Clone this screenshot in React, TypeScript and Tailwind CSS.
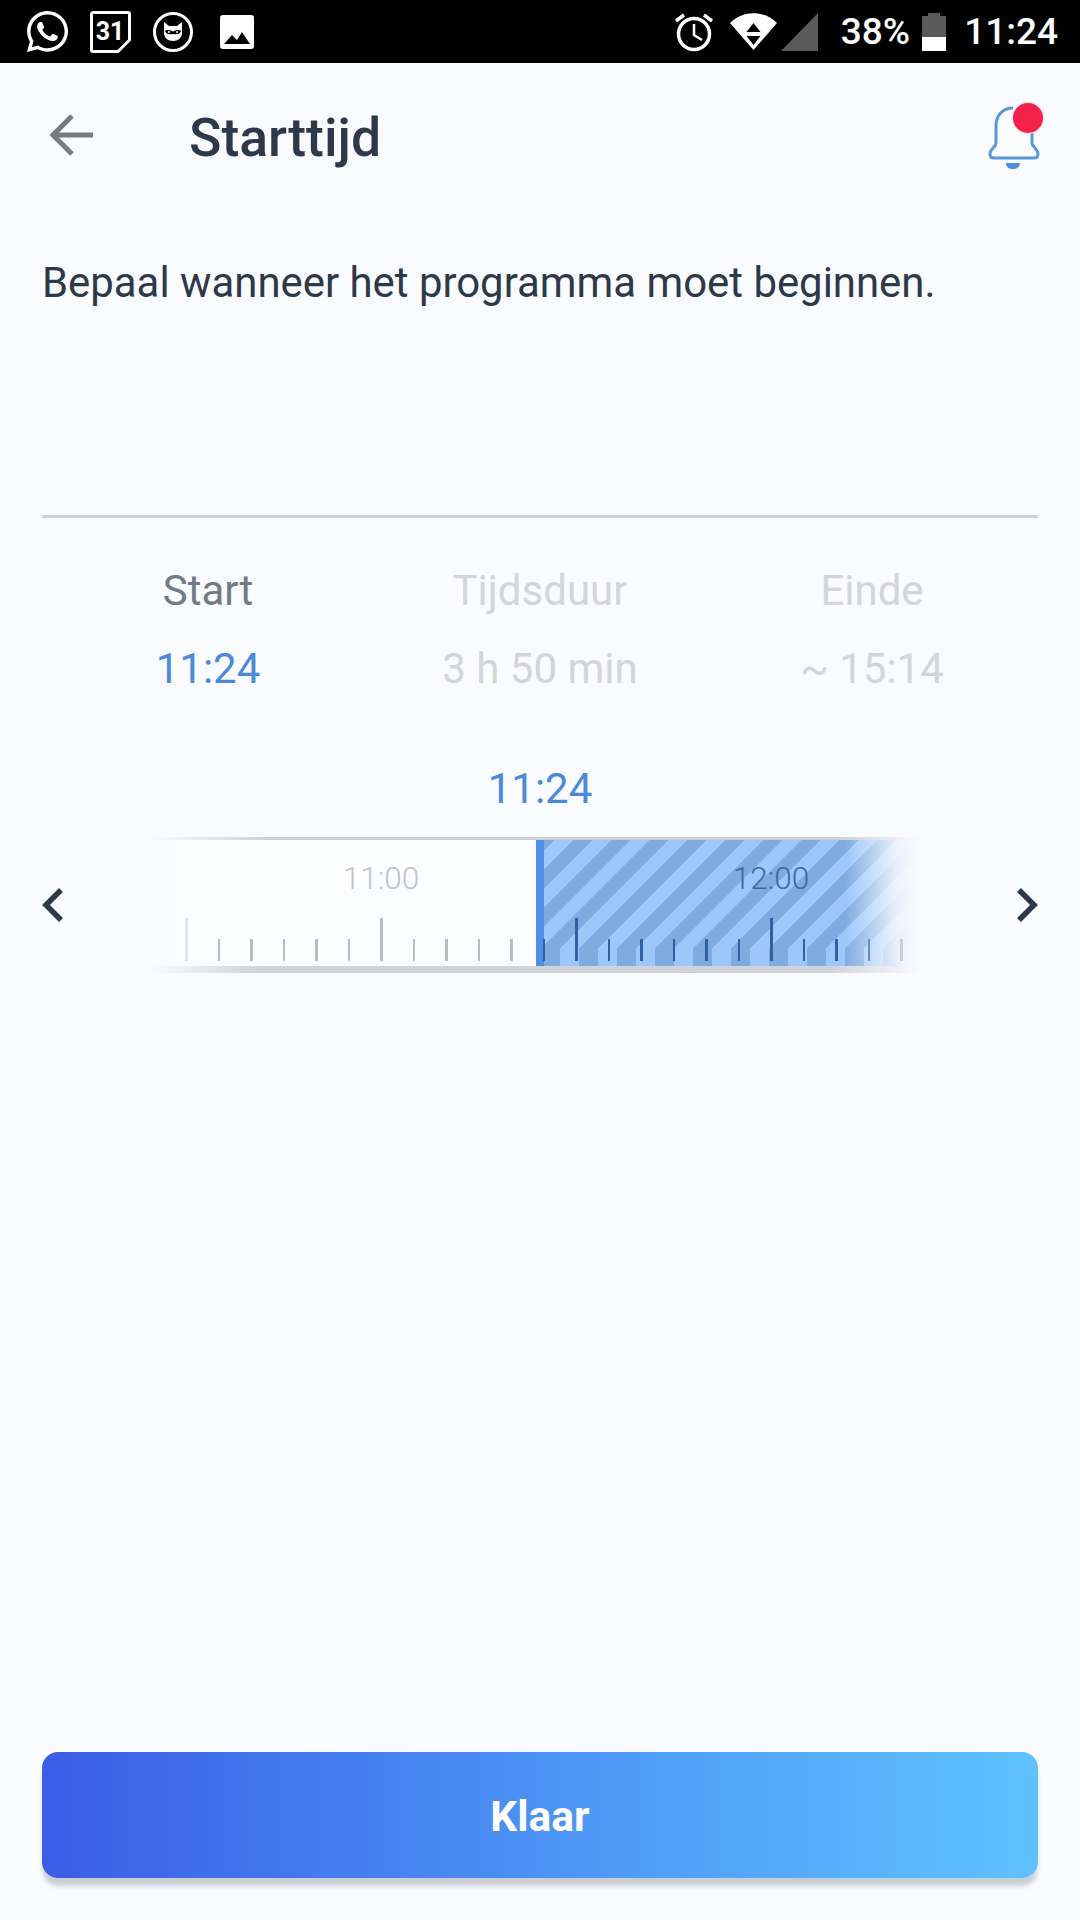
import React from "react";
import { FaWhatsapp } from "react-icons/fa";

const tickColor = (i: number) => {
  if (i === 0) return "bg-[#e3e5e9]";
  if (i <= 10) return "bg-[#b9bcc2]";
  if (i <= 20) return "bg-[#2f609f]";
  if (i === 21) return "bg-[#6f8cb8]";
  return "bg-[#c9cdd4]";
};

function StatusBar() {
  return (
    <div className="flex h-[63px] shrink-0 items-center justify-between bg-black pl-[24px] pr-[22px] text-white">
      <div className="flex items-center">
        <FaWhatsapp className="h-[47px] w-[47px]" />
        <svg width="41" height="42" viewBox="0 0 41 42" className="ml-[19px]">
          <path d="M3 1.500h35a1.500 1.500 0 0 1 1.500 1.500v26L28 40.500H3A1.500 1.500 0 0 1 1.500 39V3A1.500 1.500 0 0 1 3 1.500z" fill="none" stroke="#fff" strokeWidth="3" />
          <text x="20" y="29" textAnchor="middle" fill="#fff" fontSize="25" fontWeight="700" fontFamily="Roboto, sans-serif">31</text>
        </svg>
        <svg width="40" height="40" viewBox="0 0 40 40" className="ml-[22px]">
          <circle cx="20" cy="20" r="18.500" fill="none" stroke="#fff" strokeWidth="3" />
          <path d="M11 10l5 4h8l5-4v11c0 5-4 8-9 8s-9-3-9-8z" fill="#fff" />
          <path d="M12 18.500c3-1 5.500-.5 8 1 2.500-1.500 5-2 8-1 0 3-3.500 4.500-8 3.500-4.500 1-8-.5-8-3.500z" fill="#000" />
          <circle cx="16" cy="20" r="1" fill="#fff" />
          <circle cx="24" cy="20" r="1" fill="#fff" />
        </svg>
        <svg width="34" height="34" viewBox="0 0 34 34" className="ml-[27px]">
          <rect x="0" y="0" width="34" height="34" rx="3" fill="#fff" />
          <path d="M4 29l8-9 5 5 5-8 8 12z" fill="#000" />
        </svg>
      </div>
      <div className="flex items-center font-['Roboto',sans-serif] font-medium">
        <svg width="40" height="42" viewBox="0 0 40 42">
          <circle cx="20" cy="23" r="15.500" fill="none" stroke="#fff" strokeWidth="3.500" />
          <path d="M20 13v11l8 5" fill="none" stroke="#fff" strokeWidth="2.500" />
          <path d="M2 10l8-6M38 10l-8-6" fill="none" stroke="#fff" strokeWidth="3.500" />
        </svg>
        <svg width="47" height="39" viewBox="0 0 47 39" className="ml-[16px]">
          <path d="M0 11C13-2 34-2 47 11L23.500 38z" fill="#fff" />
          <path d="M23.500 11l7 9h-14zM16.500 24h14l-7 9z" fill="#000" />
        </svg>
        <svg width="37" height="38" viewBox="0 0 37 38" className="ml-[4px]">
          <path d="M37 0v38H0z" fill="#5a5a5a" />
        </svg>
        <span className="ml-[23px] text-[37px] leading-none">38%</span>
        <div className="ml-[12px] flex h-[38px] w-[24px] flex-col">
          <div className="mx-auto h-[3px] w-[12px] bg-[#5a5a5a]" />
          <div className="h-[21px] bg-[#5a5a5a]" />
          <div className="flex-1 bg-white" />
        </div>
        <span className="ml-[18px] text-[37px] leading-none">11:24</span>
      </div>
    </div>
  );
}

function Ruler() {
  return (
    <div className="relative flex h-[136px] w-[780px] flex-col">
      <div className="h-[3px] bg-[linear-gradient(90deg,transparent_0,#cdd0d5_120px,#cdd0d5_690px,transparent_770px)]" />
      <div className="relative flex h-[126px]">
        <div className="w-[386px] bg-[linear-gradient(90deg,#f9fbff_0,#fcfdff_60px)]" />
        <div className="relative flex-1 overflow-hidden bg-[repeating-linear-gradient(135deg,#80abe0_0,#80abe0_13.4px,#9dc6fa_13.4px,#9dc6fa_26.87px)]">
          <div className="absolute bottom-0 left-0 right-0 h-[17px] bg-[repeating-linear-gradient(90deg,#9dc6fa_0,#9dc6fa_5px,#80abe0_5px,#80abe0_24px,#9dc6fa_24px,#9dc6fa_38px)]" />
          <div className="absolute inset-y-0 left-0 w-[8px] bg-[#4f8fe6]" />
          <div className="absolute inset-y-0 right-0 w-[85px] bg-[linear-gradient(90deg,rgba(249,251,255,0)_0,rgba(249,251,255,0.5)_35%,rgba(249,251,255,0.85)_60%,#f9fbff_85%)]" />
        </div>
        <div className="absolute bottom-[5px] left-[35px] flex items-end">
          {Array.from({ length: 23 }, (_, i) => (
            <div key={i} className="w-[32.5px]">
              <div className={`w-[2.500px] ${i % 6 === 0 ? "h-[43px]" : "h-[22px]"} ${tickColor(i)}`} />
            </div>
          ))}
        </div>
        <span className="absolute left-[191px] top-[22px] w-[80px] text-center text-[31.500px] font-light leading-[34px] text-[#bfc2c7]">11:00</span>
        <span className="absolute left-[581px] top-[22px] w-[80px] text-center text-[31.500px] font-light leading-[34px] text-[#3a6aa6]">12:00</span>
      </div>
      <div className="h-[7px] bg-[linear-gradient(90deg,transparent_0,#cfd2d7_110px,#d0d3d8_680px,transparent_770px)]" />
    </div>
  );
}

export default function App() {
  return (
    <div className="flex h-screen w-full flex-col bg-[#f9fbff] font-['Roboto',sans-serif]">
      <StatusBar />
      <div className="flex h-[144px] shrink-0 items-center justify-between pl-[49px] pr-[35px]">
        <div className="flex items-center">
          <svg width="44" height="42" viewBox="0 0 44 42">
            <path d="M44 21H4M23 2L4 21l19 19" fill="none" stroke="#7a7b7d" strokeWidth="5" />
          </svg>
          <h1 className="ml-[96px] mt-[6px] text-[53.500px] font-medium leading-[60px] text-[#2d3848]">Starttijd</h1>
        </div>
        <svg width="60" height="70" viewBox="0 0 60 70">
          <path d="M28 8C17 8 11 16 11 26v17c0 4-6 6-6 11 0 3 2 4 4 4h40c2 0 4-1 4-4 0-5-6-7-6-11V30" fill="none" stroke="#5b97d6" strokeWidth="3" />
          <path d="M21 63h14c0 4-3 6-7 6s-7-2-7-6z" fill="#4f8fd6" />
          <circle cx="43" cy="18" r="16" fill="#fbdce3" />
          <circle cx="43" cy="18" r="15" fill="#f3214b" />
        </svg>
      </div>
      <p className="mt-[51px] px-[42px] text-[41.900px] leading-[50px] text-[#2d3848]">Bepaal wanneer het programma moet beginnen.</p>
      <div className="mx-[42px] mt-[207px] h-[3px] shrink-0 bg-[#cdd0d8]" />
      <div className="mt-[48px] grid grid-cols-3 px-[42px] text-center text-[42px] leading-[50px]">
        <div className="text-[#737a85]">Start</div>
        <div className="text-[#d3d5da]">Tijdsduur</div>
        <div className="text-[#d3d5da]">Einde</div>
        <div className="mt-[28px] text-[#4a8ad8]">11:24</div>
        <div className="mt-[28px] text-[#d3d5da]">3 h 50 min</div>
        <div className="mt-[28px] text-[#d3d5da]">~ 15:14</div>
      </div>
      <div className="mt-[70px] text-center text-[42px] leading-[50px] text-[#4a8ad8]">11:24</div>
      <div className="mt-[23px] flex items-center justify-between px-[42px]">
        <svg width="22" height="36" viewBox="0 0 22 36">
          <path d="M19 3L4 18l15 15" fill="none" stroke="#2d3848" strokeWidth="5.500" />
        </svg>
        <Ruler />
        <svg width="22" height="36" viewBox="0 0 22 36">
          <path d="M3 3l15 15L3 33" fill="none" stroke="#2d3848" strokeWidth="5.500" />
        </svg>
      </div>
      <div className="flex-1" />
      <button className="mx-[42px] mb-[42px] flex h-[126px] shrink-0 items-center justify-center rounded-[16px] bg-[linear-gradient(90deg,#3a5de6_0%,#4f9df7_60%,#5fc2ff_100%)] pt-[3px] text-[42.500px] font-bold text-white shadow-[0_9px_5px_-1px_#c9ced3]">
        Klaar
      </button>
    </div>
  );
}
